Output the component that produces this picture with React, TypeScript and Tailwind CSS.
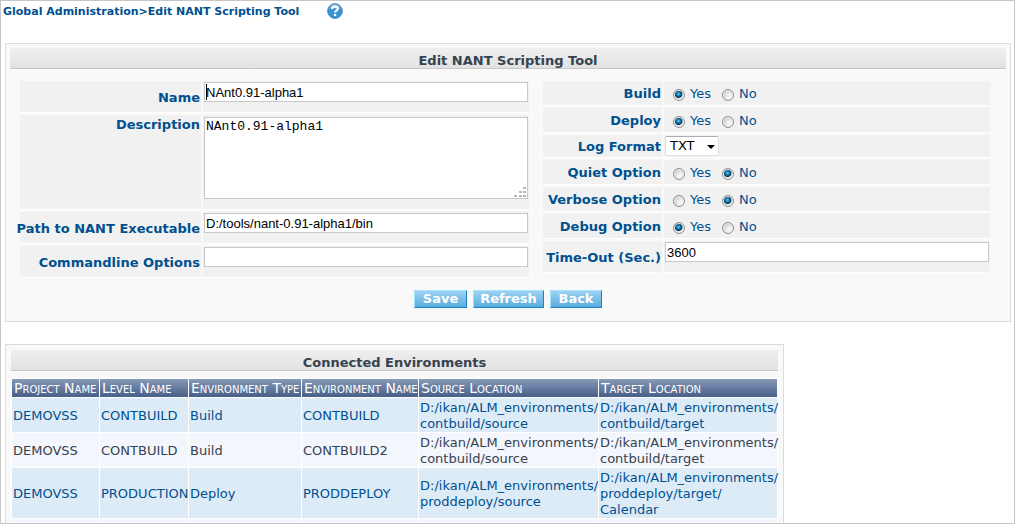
import type { ReactNode } from "react";

const fieldClass =
  "block h-5 w-full border border-[#c8c8c8] bg-white px-px font-['Liberation_Sans',Arial,sans-serif] text-[13px] leading-4 text-black outline-none";

const cellBase = "border-b border-white bg-[#f1f1f1]";

type RowProps = { id: string; label: string; children: ReactNode; labelClass: string; cellClass: string };

function Row({ id, label, children, labelClass, cellClass }: RowProps) {
  return (
    <>
      <div className={`${cellBase} flex items-start justify-end pr-px font-bold whitespace-nowrap ${labelClass}`}>
        <label htmlFor={id}>{label}</label>
      </div>
      <div className={`${cellBase} min-w-0 px-px ${cellClass}`}>{children}</div>
    </>
  );
}

function TextRow({ id, label, value, caret }: { id: string; label: string; value: string; caret?: boolean }) {
  return (
    <Row id={id} label={label} labelClass="h-8 pt-[9px]" cellClass="relative h-8 pt-px">
      <input id={id} type="text" defaultValue={value} className={fieldClass} />
      {caret && <span className="absolute top-[3px] left-[3px] h-4 w-px bg-black" />}
    </Row>
  );
}

function Radio({ id, name, label, checked }: { id: string; name: string; label: string; checked: boolean }) {
  return (
    <span className="flex items-start gap-[5px]">
      <input
        id={id}
        type="radio"
        name={name}
        defaultChecked={checked}
        className="mt-[3px] size-3 shrink-0 appearance-none rounded-full border border-[#8c8f94] bg-[radial-gradient(circle_at_65%_65%,#f4f4f4_20%,#c3c6ca_75%)] shadow-[inset_0_0_0_1px_#f4f4f4] checked:bg-[radial-gradient(circle_at_45%_40%,#6fd0f5_0,#1685bd_20%,#0b3350_44%,#e4e7ea_54%)]"
      />
      <label htmlFor={id}>{label}</label>
    </span>
  );
}

function YesNoRow({ name, label, yes }: { name: string; label: string; yes: boolean }) {
  return (
    <Row id={`${name}-yes`} label={label} labelClass="h-[25px] pt-[5px]" cellClass="h-[25px] pt-[5px]">
      <div className="flex gap-[11px] pl-2">
        <Radio id={`${name}-yes`} name={name} label="Yes" checked={yes} />
        <Radio id={`${name}-no`} name={name} label="No" checked={!yes} />
      </div>
    </Row>
  );
}

function PanelTitle({ children }: { children: ReactNode }) {
  return (
    <h2 className="h-[21px] border-b border-[#c8c8c8] bg-linear-to-b from-[#efefef] to-[#e2e2e2] pt-[5px] text-center font-bold text-[#36424f]">
      {children}
    </h2>
  );
}

function HelpIcon() {
  return (
    <svg viewBox="0 0 16 16" className="size-4" aria-hidden="true">
      <defs>
        <linearGradient id="help" x1="0" y1="0" x2="0" y2="1">
          <stop offset="0" stopColor="#8dbfe6" />
          <stop offset="0.45" stopColor="#3f8fd0" />
          <stop offset="1" stopColor="#2a9ae0" />
        </linearGradient>
      </defs>
      <circle cx="8" cy="8" r="7.4" fill="url(#help)" stroke="#4a83b8" strokeWidth="0.9" />
      <path d="M5.1 6.1C5.1 4.3 6.4 3.6 8 3.6s2.8.8 2.8 2.2c0 1.9-2.7 1.8-2.7 3.8" fill="none" stroke="#fff" strokeWidth="2.1" />
      <circle cx="8.1" cy="12" r="1.3" fill="#fff" />
    </svg>
  );
}

const columns = [
  { title: "Project Name", width: "w-[87px]" },
  { title: "Level Name", width: "w-[88px]" },
  { title: "Environment Type", width: "w-[112px]" },
  { title: "Environment Name", width: "w-[116px]" },
  { title: "Source Location", width: "w-[179px]" },
  { title: "Target Location", width: "w-[178px]" },
];

const rows = [
  ["DEMOVSS", "CONTBUILD", "Build", "CONTBUILD", "D:/ikan/ALM_environments/\ncontbuild/source", "D:/ikan/ALM_environments/\ncontbuild/target"],
  ["DEMOVSS", "CONTBUILD", "Build", "CONTBUILD2", "D:/ikan/ALM_environments/\ncontbuild/source", "D:/ikan/ALM_environments/\ncontbuild/target"],
  ["DEMOVSS", "PRODUCTION", "Deploy", "PRODDEPLOY", "D:/ikan/ALM_environments/\nproddeploy/source", "D:/ikan/ALM_environments/\nproddeploy/target/\nCalendar"],
  ["", "", "", "", "", ""],
];

const buttonClass =
  "h-[18px] border border-t-[#a2e4fc] border-r-[#1d81bd] border-b-[#1d81bd] border-l-[#a2e4fc] bg-linear-to-b from-[#9dd2f2] to-[#58addf] text-center leading-4 font-bold text-white";

export default function App() {
  return (
    <div className="h-screen overflow-hidden border border-[#c6c6c6] bg-white px-1 font-[Verdana,'DejaVu_Sans',sans-serif] text-[13px] leading-4 text-[#00508f]">
      <header className="-ml-0.5 flex h-[42px] items-start gap-4 pt-0.5">
        <h1 className="min-w-[308px] pt-px text-[11px] font-bold whitespace-nowrap">
          Global Administration&gt;Edit NANT Scripting Tool
        </h1>
        <a href="#help" aria-label="Help">
          <HelpIcon />
        </a>
      </header>

      <main>
        <form className="mr-[-1px] border border-[#dcdcdc] bg-[#f9f9f9] p-1 pb-[13px]">
          <PanelTitle>Edit NANT Scripting Tool</PanelTitle>
          <div className="flex items-start gap-3.5 pt-3 pr-4 pl-2.5">
            <div className="grid grow basis-[183px] grid-cols-[181px_minmax(0,1fr)] gap-0.5">
              <TextRow id="name" label="Name" value="NAnt0.91-alpha1" caret />
              <Row id="description" label="Description" labelClass="pt-0.5" cellClass="relative h-[95px] pt-0.5">
                <textarea
                  id="description"
                  defaultValue="NAnt0.91-alpha1"
                  className="block h-[82px] w-full resize-none border border-[#c8c8c8] bg-white px-px pt-px font-['Liberation_Mono','Courier_New',monospace] text-[13px] leading-4 text-black outline-none"
                />
                <svg viewBox="0 0 12 10" className="absolute top-[72px] right-[3px] h-2.5 w-3" fill="#b8b8b8" aria-hidden="true">
                  <path d="M9 0h3v2H9zM5 4h3v2H5zM9 4h3v2H9zM0 8h3v2H0zM5 8h3v2H5zM9 8h3v2H9z" />
                </svg>
              </Row>
              <TextRow id="path" label="Path to NANT Executable" value="D:/tools/nant-0.91-alpha1/bin" />
              <TextRow id="options" label="Commandline Options" value="" />
            </div>
            <div className="grid grow basis-[121px] grid-cols-[119px_minmax(0,1fr)] gap-0.5">
              <YesNoRow name="build" label="Build" yes />
              <YesNoRow name="deploy" label="Deploy" yes />
              <Row id="format" label="Log Format" labelClass="h-[23px] pt-1" cellClass="h-[23px] pt-px">
                <div className="relative w-[54px]">
                  <select
                    id="format"
                    defaultValue="TXT"
                    className="block h-5 w-full appearance-none rounded-xs border border-[#dcdfe6] border-t-[#abadb3] bg-white pl-1 leading-4 text-black outline-none"
                  >
                    <option>TXT</option>
                  </select>
                  <svg viewBox="0 0 8 4" className="pointer-events-none absolute top-[9px] right-1 h-1 w-2" aria-hidden="true">
                    <path d="M0 0h8L4 4z" fill="#000" />
                  </svg>
                </div>
              </Row>
              <YesNoRow name="quiet" label="Quiet Option" yes={false} />
              <YesNoRow name="verbose" label="Verbose Option" yes={false} />
              <YesNoRow name="debug" label="Debug Option" yes />
              <TextRow id="timeout" label="Time-Out (Sec.)" value="3600" />
            </div>
          </div>
          <div className="flex justify-center gap-1.5 pt-3">
            <button type="button" className={`${buttonClass} w-[53px]`}>Save</button>
            <button type="button" className={`${buttonClass} w-[71px]`}>Refresh</button>
            <button type="button" className={`${buttonClass} w-[52px]`}>Back</button>
          </div>
        </form>

        <section className="mt-[22px] w-fit border border-[#dcdcdc] bg-[#f9f9f9] p-[5px]">
          <PanelTitle>Connected Environments</PanelTitle>
          <table className="mt-[7px] w-[767px] table-fixed border-separate border-spacing-px bg-white">
            <thead>
              <tr>
                {columns.map((c) => (
                  <th
                    key={c.title}
                    scope="col"
                    className={`${c.width} h-[18px] bg-linear-to-b from-[#879ab9] to-[#485f87] p-0 pl-0.5 text-left text-sm leading-4 font-normal whitespace-nowrap text-white [font-variant:small-caps]`}
                  >
                    {c.title}
                  </th>
                ))}
              </tr>
            </thead>
            <tbody>
              {rows.map((row, i) => (
                <tr key={i} className="bg-[#f3f6fc] text-[#36424f] odd:bg-[#ddebf7] odd:text-[#00508f]">
                  {row.map((text, j) => (
                    <td key={j} className="h-[34px] pt-0.5 pl-px align-middle whitespace-pre">
                      {text}
                    </td>
                  ))}
                </tr>
              ))}
            </tbody>
          </table>
        </section>
      </main>
    </div>
  );
}
